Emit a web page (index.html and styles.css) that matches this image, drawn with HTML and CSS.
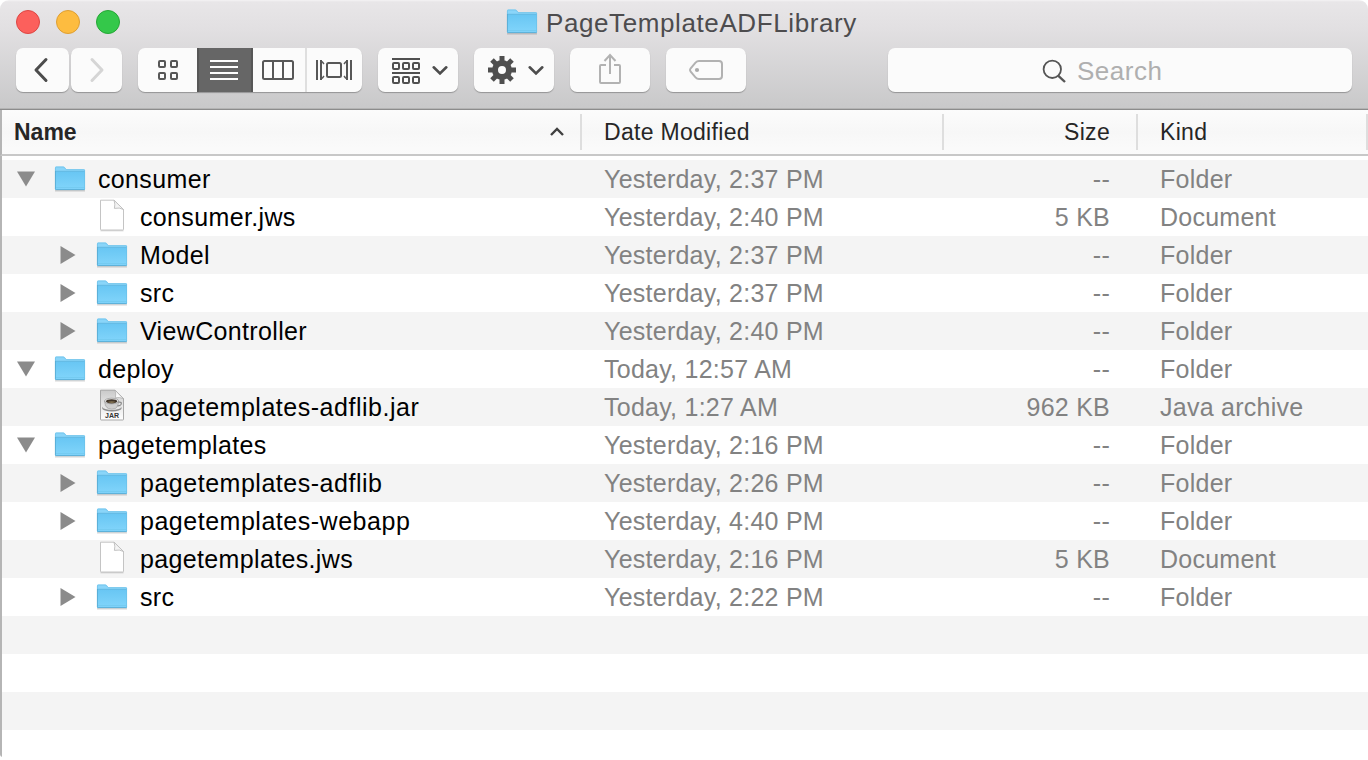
FILE: index.html
```html
<!DOCTYPE html>
<html lang="en">
<head>
<meta charset="utf-8">
<title>PageTemplateADFLibrary</title>
<link rel="stylesheet" href="styles.css">
</head>
<body>
<svg class="defs" width="0" height="0" aria-hidden="true">
  <defs>
    <linearGradient id="folderFill" x1="0" y1="0" x2="0" y2="1">
      <stop offset="0" stop-color="#68c6f3"/><stop offset="1" stop-color="#82d5fb"/>
    </linearGradient>
    <linearGradient id="paperFill" x1="0" y1="0" x2="0" y2="1">
      <stop offset="0" stop-color="#c9c9c9"/><stop offset=".6" stop-color="#ececec"/><stop offset="1" stop-color="#fff"/>
    </linearGradient>
    <symbol id="folder" viewBox="0 0 32 26">
      <path d="M1 24.8H31" stroke="#000" stroke-opacity=".17" stroke-width="1.4"/>
      <path d="M1 2Q1 .6 2.3.6H9.2Q10.2.6 10.8 1.3L12.4 3.2H30Q31 3.2 31 4.3V23.2Q31 24 30 24H2Q1 24 1 23.2Z" fill="#8ad5f9"/>
      <path d="M1 5.6H31V23Q31 24 30 24H2Q1 24 1 23Z" fill="url(#folderFill)"/>
      <path d="M1.3 5.3H30.7" stroke="#5db5df" stroke-width=".9"/>
      <path d="M1.6 21.6H30.4" stroke="#70c5ec" stroke-width=".7"/>
      <path d="M1.4 5V2Q1.4 1 2.3 1H9.2Q10 1 10.6 1.7L12.2 3.6H29.8Q30.6 3.6 30.6 4.4V22.9" fill="none" stroke="#6cc0e8" stroke-width=".7"/>
      <path d="M1.4 5V22.9Q1.4 23.6 2.2 23.6H29.8Q30.6 23.6 30.6 22.9" fill="none" stroke="#52a5cd" stroke-width=".8"/>
    </symbol>
    <symbol id="doc" viewBox="0 0 26 33">
      <path d="M1.5 31.8H24.5" stroke="#000" stroke-opacity=".18"/>
      <path d="M1.5 1.2H15L24.5 10.5V30.4Q24.5 31 23.9 31H2.1Q1.5 31 1.5 30.4Z" fill="#fff" stroke="#bdbdbd" stroke-width=".9"/>
      <path d="M15 1.2Q16.5 5 15.4 9.4Q20.5 8.2 24.5 10.5Z" fill="#f4f4f4" stroke="#bcbcbc" stroke-width=".9"/>
    </symbol>
    <symbol id="jar" viewBox="0 0 26 33">
      <path d="M1.5 1.2H16L24.5 9.5V30.4Q24.5 31 23.9 31H2.1Q1.5 31 1.5 30.4Z" fill="url(#paperFill)" stroke="#9f9f9f" stroke-width=".9"/>
      <path d="M16 1.2Q17.3 5 16.4 8.8Q20.8 7.7 24.5 9.8Z" fill="#fafafa" stroke="#aaa" stroke-width=".7"/>
      <ellipse cx="12.9" cy="19" rx="9.8" ry="3.6" fill="#8d8d8d"/>
      <ellipse cx="12.9" cy="18" rx="9.3" ry="3" fill="#e7e7e7"/>
      <path d="M5.7 12.2Q6 18 9.4 19.6Q12.8 20.8 16.2 19.6Q19.2 18 19.6 12.2Z" fill="#cfcfcf" stroke="#888" stroke-width=".5"/>
      <path d="M19.3 13.2Q23.4 12.6 22 15.5Q21 17 18.6 16.8" fill="none" stroke="#888" stroke-width="1.2"/>
      <ellipse cx="12.6" cy="12" rx="7" ry="2.8" fill="#eee" stroke="#777" stroke-width=".5"/>
      <ellipse cx="12.6" cy="12.3" rx="5.7" ry="2.1" fill="#40352a"/>
      <ellipse cx="12.6" cy="13.1" rx="3.5" ry=".8" fill="#827252"/>
      <text x="13" y="29.4" text-anchor="middle" class="jar-label">JAR</text>
    </symbol>
    <symbol id="down" viewBox="0 0 18 16"><path d="M0 .5H18L9 15.5Z" fill="#8b8b8b"/></symbol>
    <symbol id="right" viewBox="0 0 16 18"><path d="M.5 0V18L15.5 9Z" fill="#8b8b8b"/></symbol>
    <symbol id="chev" viewBox="0 0 16 10"><path d="M1.7 1.8L8 8L14.3 1.8" fill="none" stroke="#4d4d4d" stroke-width="2.6" stroke-linecap="round"/></symbol>
  </defs>
</svg>
<div class="window">
  <header class="chrome">
    <div class="titlebar">
      <div class="lights"><i class="light red"></i><i class="light yellow"></i><i class="light green"></i></div>
      <div class="title"><svg class="folder"><use href="#folder"/></svg><span>PageTemplateADFLibrary</span></div>
    </div>
    <div class="toolbar">
      <div class="nav">
        <button class="btn back"><svg width="53" height="44"><path d="M30 11.5L20 22L30 32.5" fill="none" stroke="#4c4c4c" stroke-width="3" stroke-linecap="round" stroke-linejoin="round"/></svg></button>
        <button class="btn fwd"><svg width="51" height="44"><path d="M21 11.5L31 22L21 32.5" fill="none" stroke="#d5d5d5" stroke-width="3" stroke-linecap="round" stroke-linejoin="round"/></svg></button>
      </div>
      <div class="views btn">
        <span class="view v1"><svg width="59" height="44" fill="none" stroke="#575757" stroke-width="2"><rect x="21" y="13" width="6" height="6" rx="1"/><rect x="33" y="13" width="6" height="6" rx="1"/><rect x="21" y="25" width="6" height="6" rx="1"/><rect x="33" y="25" width="6" height="6" rx="1"/></svg></span>
        <span class="view v2"><svg width="56" height="44" stroke="#fff" stroke-width="2"><path d="M13 13H41M13 19H41M13 25H41M13 31H41"/></svg></span>
        <span class="view v3"><svg width="52" height="44" fill="none" stroke="#575757" stroke-width="2"><rect x="10" y="13" width="30" height="18" rx="1.5"/><path d="M20 13V31M30 13V31"/></svg></span>
        <span class="view v4"><svg width="55" height="44" fill="none" stroke="#575757" stroke-width="2"><path d="M10 12V32M14 12V32M40 12V32M44 12V32"/><path d="M15 13.5L17 16M15 30.5L17 28M39 13.5L37 16M39 30.5L37 28" stroke-width="1.4"/><rect x="20" y="15" width="14" height="14" rx="1.5"/></svg></span>
      </div>
      <button class="btn action"><svg class="glyph" width="80" height="44" fill="none" stroke="#505050" stroke-width="2"><path d="M14 11H42M14 25H42"/><rect x="15" y="15" width="6" height="6" rx="1"/><rect x="25" y="15" width="6" height="6" rx="1"/><rect x="35" y="15" width="6" height="6" rx="1"/><rect x="15" y="29" width="6" height="6" rx="1"/><rect x="25" y="29" width="6" height="6" rx="1"/><rect x="35" y="29" width="6" height="6" rx="1"/><use href="#chev" x="54" y="17.5" width="16" height="10"/></svg></button>
      <button class="btn action"><svg width="80" height="44"><g transform="translate(28 22)" fill="none" stroke="#4f4f4f"><circle r="7" stroke-width="6"/><path stroke-width="5" d="M0-8V-14M0 8V14M-8 0H-14M8 0H14M-6-6L-10-10M6-6L10-10M-6 6L-10 10M6 6L10 10"/></g><use href="#chev" x="54" y="17.5" width="16" height="10"/></svg></button>
      <button class="btn action"><svg width="80" height="44" fill="none" stroke="#b2b2b2" stroke-width="2"><path d="M36 17H31Q30 17 30 18V34Q30 35 31 35H49Q50 35 50 34V18Q50 17 49 17H44M40 26V8M34.5 13L40 7L45.5 13"/></svg></button>
      <button class="btn action"><svg width="80" height="44"><path d="M33 13H53Q56 13 56 16V28Q56 31 53 31H33Q31 31 29.5 29.3L24.5 23.5Q23.4 22 24.5 20.5L29.5 14.7Q31 13 33 13Z" fill="none" stroke="#b2b2b2" stroke-width="2"/><circle cx="31" cy="22" r="2.1" fill="#aaa"/></svg></button>
      <div class="btn search"><svg width="26" height="26"><circle cx="10.3" cy="10.3" r="8.7" fill="none" stroke="#555" stroke-width="1.8"/><path d="M16.4 16.8L23 23" stroke="#555" stroke-width="2.4"/></svg><span>Search</span></div>
    </div>
  </header>
  <div class="heads">
    <div class="head name"><span>Name</span><svg width="16" height="10"><path d="M2 8L8 2L14 8" fill="none" stroke="#404040" stroke-width="2.4"/></svg></div>
    <div class="head">Date Modified</div>
    <div class="head size">Size</div>
    <div class="head kind">Kind</div>
  </div>
  <main class="list">
    <div class="row"><div class="file"><svg class="down"><use href="#down"/></svg><svg class="folder"><use href="#folder"/></svg><span>consumer</span></div><span class="date">Yesterday, 2:37 PM</span><span class="bytes">--</span><span class="type">Folder</span></div>
    <div class="row"><div class="file leaf"><svg class="doc"><use href="#doc"/></svg><span>consumer.jws</span></div><span class="date">Yesterday, 2:40 PM</span><span class="bytes">5 KB</span><span class="type">Document</span></div>
    <div class="row"><div class="file child"><svg class="right"><use href="#right"/></svg><svg class="folder"><use href="#folder"/></svg><span>Model</span></div><span class="date">Yesterday, 2:37 PM</span><span class="bytes">--</span><span class="type">Folder</span></div>
    <div class="row"><div class="file child"><svg class="right"><use href="#right"/></svg><svg class="folder"><use href="#folder"/></svg><span>src</span></div><span class="date">Yesterday, 2:37 PM</span><span class="bytes">--</span><span class="type">Folder</span></div>
    <div class="row"><div class="file child"><svg class="right"><use href="#right"/></svg><svg class="folder"><use href="#folder"/></svg><span>ViewController</span></div><span class="date">Yesterday, 2:40 PM</span><span class="bytes">--</span><span class="type">Folder</span></div>
    <div class="row"><div class="file"><svg class="down"><use href="#down"/></svg><svg class="folder"><use href="#folder"/></svg><span>deploy</span></div><span class="date">Today, 12:57 AM</span><span class="bytes">--</span><span class="type">Folder</span></div>
    <div class="row"><div class="file leaf wide"><svg class="doc"><use href="#jar"/></svg><span>pagetemplates-adflib.jar</span></div><span class="date">Today, 1:27 AM</span><span class="bytes">962 KB</span><span class="type">Java archive</span></div>
    <div class="row"><div class="file"><svg class="down"><use href="#down"/></svg><svg class="folder"><use href="#folder"/></svg><span>pagetemplates</span></div><span class="date">Yesterday, 2:16 PM</span><span class="bytes">--</span><span class="type">Folder</span></div>
    <div class="row"><div class="file child wide"><svg class="right"><use href="#right"/></svg><svg class="folder"><use href="#folder"/></svg><span>pagetemplates-adflib</span></div><span class="date">Yesterday, 2:26 PM</span><span class="bytes">--</span><span class="type">Folder</span></div>
    <div class="row"><div class="file child wide"><svg class="right"><use href="#right"/></svg><svg class="folder"><use href="#folder"/></svg><span>pagetemplates-webapp</span></div><span class="date">Yesterday, 4:40 PM</span><span class="bytes">--</span><span class="type">Folder</span></div>
    <div class="row"><div class="file leaf"><svg class="doc"><use href="#doc"/></svg><span>pagetemplates.jws</span></div><span class="date">Yesterday, 2:16 PM</span><span class="bytes">5 KB</span><span class="type">Document</span></div>
    <div class="row"><div class="file child"><svg class="right"><use href="#right"/></svg><svg class="folder"><use href="#folder"/></svg><span>src</span></div><span class="date">Yesterday, 2:22 PM</span><span class="bytes">--</span><span class="type">Folder</span></div>
    <div class="row"></div><div class="row"></div><div class="row"></div><div class="row"></div>
  </main>
</div>
</body>
</html>
```
FILE: styles.css
```css
* { box-sizing: border-box; }
body { margin: 0; background: #fff; font-family: "Liberation Sans", Arial, sans-serif; overflow: hidden; }
svg { display: block; flex: none; }
.defs { position: absolute; }
.window { width: 1368px; height: 757px; overflow: hidden; border-radius: 9px 9px 3px 3px; }
.chrome {
  height: 110px;
  background: linear-gradient(#f4f3f4 0, #e8e6e8 2px, #e2e0e2 28px, #c9c9ca 107px);
  border-bottom: 1px solid #8c8c8c;
  box-shadow: inset 0 -1px #b4b4b4;
}
.titlebar { height: 48px; display: grid; grid-template-columns: 506px auto; }
.lights { display: flex; gap: 16px; padding: 10px 0 0 16px; }
.light { width: 24px; height: 24px; border-radius: 50%; border: 1px solid; }
.red { background: #fc605c; border-color: #de4643; }
.yellow { background: #fdbc40; border-color: #df9f32; }
.green { background: #34c84a; border-color: #25a735; }
.title { display: flex; align-items: flex-start; padding-top: 9px; font-size: 26px; line-height: 28px; color: #4d4c4e; letter-spacing: .6px; }
.title span { margin-left: 8px; }
.folder { width: 32px; height: 26px; }
.toolbar { display: flex; height: 44px; padding-left: 16px; }
.nav { display: flex; gap: 2px; margin-right: 16px; }
.btn { height: 44px; padding: 0; border: 0; border-radius: 7px; background: #fbfbfb; box-shadow: 0 1px 1px rgba(0,0,0,.28); overflow: hidden; }
.back { width: 53px; }
.fwd { width: 51px; }
.views { display: flex; width: 224px; margin-right: 16px; }
.view { height: 44px; }
.v2 { background: #666; border-left: 2px solid #575757; border-right: 2px solid #575757; width: 56px; }
.v2 svg { margin-left: -2px; }
.v3 { width: 54px; border-right: 2px solid #dfdfdf; }
.action { width: 80px; margin-right: 16px; }
.search { width: 464px; margin-left: 126px; display: flex; padding: 11px 0 0 154px; font-size: 26px; line-height: 24px; color: #afafaf; letter-spacing: .5px; }
.search span { margin-left: 9px; }
.heads {
  height: 46px; display: grid; grid-template-columns: 580px 362px 194px 230px;
  padding: 4px 0; border-left: 2px solid #b5b5b5; border-bottom: 2px solid #c8c8c8;
  background: linear-gradient(#fcfcfc, #f7f7f7 50%, #fbfbfb); font-size: 23px; color: #262626; letter-spacing: .3px;
}
.head { height: 36px; line-height: 36px; padding-left: 22px; border-right: 2px solid #dedede; }
.head.name { display: flex; justify-content: space-between; align-items: center; font-weight: bold; padding: 0 15px 0 12px; letter-spacing: 0; }
.head.size { text-align: right; padding-right: 26px; }
.list { padding-top: 4px; background: #fff; border-left: 2px solid #b5b5b5; height: 601px; overflow: hidden; }
.row { height: 38px; display: grid; grid-template-columns: 602px 340px 166px 1fr; font-size: 25px; line-height: 39px; letter-spacing: .25px; color: #828282; white-space: nowrap; }
.row:nth-child(odd) { background: #f4f4f4; }
.file { display: flex; color: #000; padding-left: 15px; letter-spacing: .35px; }
.file.wide { letter-spacing: .52px; }
.file.child { padding-left: 58px; }
.file.leaf { padding-left: 97px; }
.file span { margin-left: 12px; }
.file.leaf span { margin-left: 15px; }
.row .folder { margin: 6px 0 0 19px; }
.child .folder { margin-left: 20px; }
.down { width: 18px; height: 16px; margin-top: 11px; }
.right { width: 16px; height: 18px; margin-top: 10px; }
.doc { width: 26px; height: 33px; margin-top: 1px; }
.bytes { text-align: right; }
.type { padding-left: 50px; }
.jar-label { font: bold 7px "Liberation Sans", sans-serif; letter-spacing: 0; fill: #333; }
```
